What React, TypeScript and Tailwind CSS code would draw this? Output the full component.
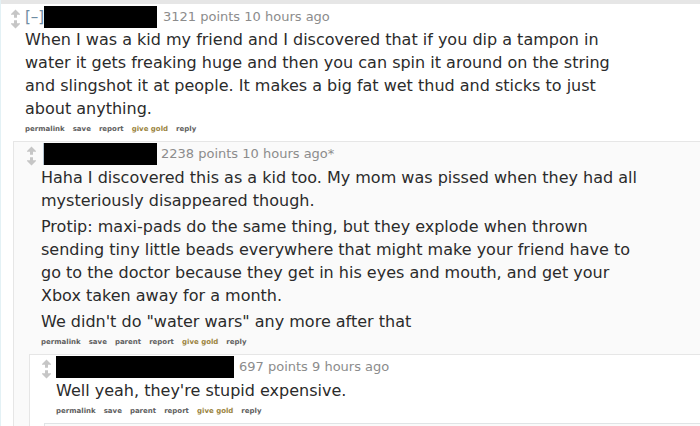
import type { ReactNode } from "react";

function VoteArrows() {
  return (
    <div className="flex w-[11px] shrink-0 flex-col items-center">
      <button type="button" aria-label="upvote" className="block text-[#c6c6c6]">
        <svg width="11" height="10" viewBox="0 0 11 10" fill="currentColor" aria-hidden="true">
          <path d="M5.5 0.5 L10 5 V5.8 H7 V8.8 H4 V5.8 H1 V5 Z" />
        </svg>
      </button>
      <button type="button" aria-label="downvote" className="block text-[#c6c6c6]">
        <svg width="11" height="10" viewBox="0 0 11 10" fill="currentColor" aria-hidden="true">
          <path d="M5.5 9.5 L10 5 V4.2 H7 V1.2 H4 V4.2 H1 V5 Z" />
        </svg>
      </button>
    </div>
  );
}

function Actions({ items }: { items: string[] }) {
  return (
    <nav className="flex h-[21px] items-start gap-2 pt-px text-[7px] font-bold leading-4 text-[#606060]">
      {items.map((item) => (
        <a key={item} href="#" className={item === "give gold" ? "text-[#9a8440]" : undefined}>
          {item}
        </a>
      ))}
    </nav>
  );
}

type CommentProps = {
  className?: string;
  headerClassName?: string;
  tagline: ReactNode;
  paragraphs: string[];
  actions: string[];
  children?: ReactNode;
};

function Comment({
  className = "",
  headerClassName = "h-[23px]",
  tagline,
  paragraphs,
  actions,
  children,
}: CommentProps) {
  return (
    <article className={className}>
      <div className="flex gap-1 pt-px">
        <div className="pt-[3px]">
          <VoteArrows />
        </div>
        <div className="min-w-0 flex-1">
          <header className={`flex items-start text-[13px] leading-[22px] text-[#8c8c8c] ${headerClassName}`}>
            {tagline}
          </header>
          <div className="flex max-w-[612px] flex-col gap-[3px] text-[16px] leading-[23px] text-[#2b2b2b]">
            {paragraphs.map((text) => (
              <p key={text}>{text}</p>
            ))}
          </div>
          <Actions items={actions} />
        </div>
      </div>
      {children}
    </article>
  );
}

export default function App() {
  return (
    <main className="h-screen overflow-hidden border-l border-[#e3f1f5] bg-white font-['Verdana','DejaVu_Sans',sans-serif]">
      <div className="h-1 bg-[#e6e6e6]" />
      <Comment
        className="pl-[9px] pt-px"
        headerClassName="h-[22px]"
        tagline={
          <>
            <button
              type="button"
              aria-label="collapse"
              className="w-[19px] overflow-hidden whitespace-nowrap text-left text-[15px] text-[#6f8ca3]"
            >
              [–]
            </button>
            <span className="mr-[6px] h-[22px] w-[113px] bg-black" />
            <span>3121 points 10 hours ago</span>
          </>
        }
        paragraphs={[
          "When I was a kid my friend and I discovered that if you dip a tampon in water it gets freaking huge and then you can spin it around on the string and slingshot it at people. It makes a big fat wet thud and sticks to just about anything.",
        ]}
        actions={["permalink", "save", "report", "give gold", "reply"]}
      >
        <Comment
          className="ml-[3px] border-l border-t border-[#e6e6e6] bg-[#fafafa] pl-3"
          tagline={
            <>
              <span className="ml-[2px] h-[22px] w-px bg-[#b4c3cf]" />
              <span className="mr-1 h-[22px] w-[113px] bg-black" />
              <span>2238 points 10 hours ago*</span>
            </>
          }
          paragraphs={[
            "Haha I discovered this as a kid too. My mom was pissed when they had all mysteriously disappeared though.",
            "Protip: maxi-pads do the same thing, but they explode when thrown sending tiny little beads everywhere that might make your friend have to go to the doctor because they get in his eyes and mouth, and get your Xbox taken away for a month.",
            "We didn't do \"water wars\" any more after that",
          ]}
          actions={["permalink", "save", "parent", "report", "give gold", "reply"]}
        >
          <Comment
            className="ml-[3px] border-l border-t border-[#e6e6e6] bg-white pl-[11px]"
            tagline={
              <>
                <span className="mr-[5px] h-[22px] w-[178px] bg-black" />
                <span>697 points 9 hours ago</span>
              </>
            }
            paragraphs={["Well yeah, they're stupid expensive."]}
            actions={["permalink", "save", "parent", "report", "give gold", "reply"]}
          >
            <div className="ml-[3px] h-4 border-l border-t border-[#e0e4e6] bg-[#fafafa]" />
          </Comment>
        </Comment>
      </Comment>
    </main>
  );
}
